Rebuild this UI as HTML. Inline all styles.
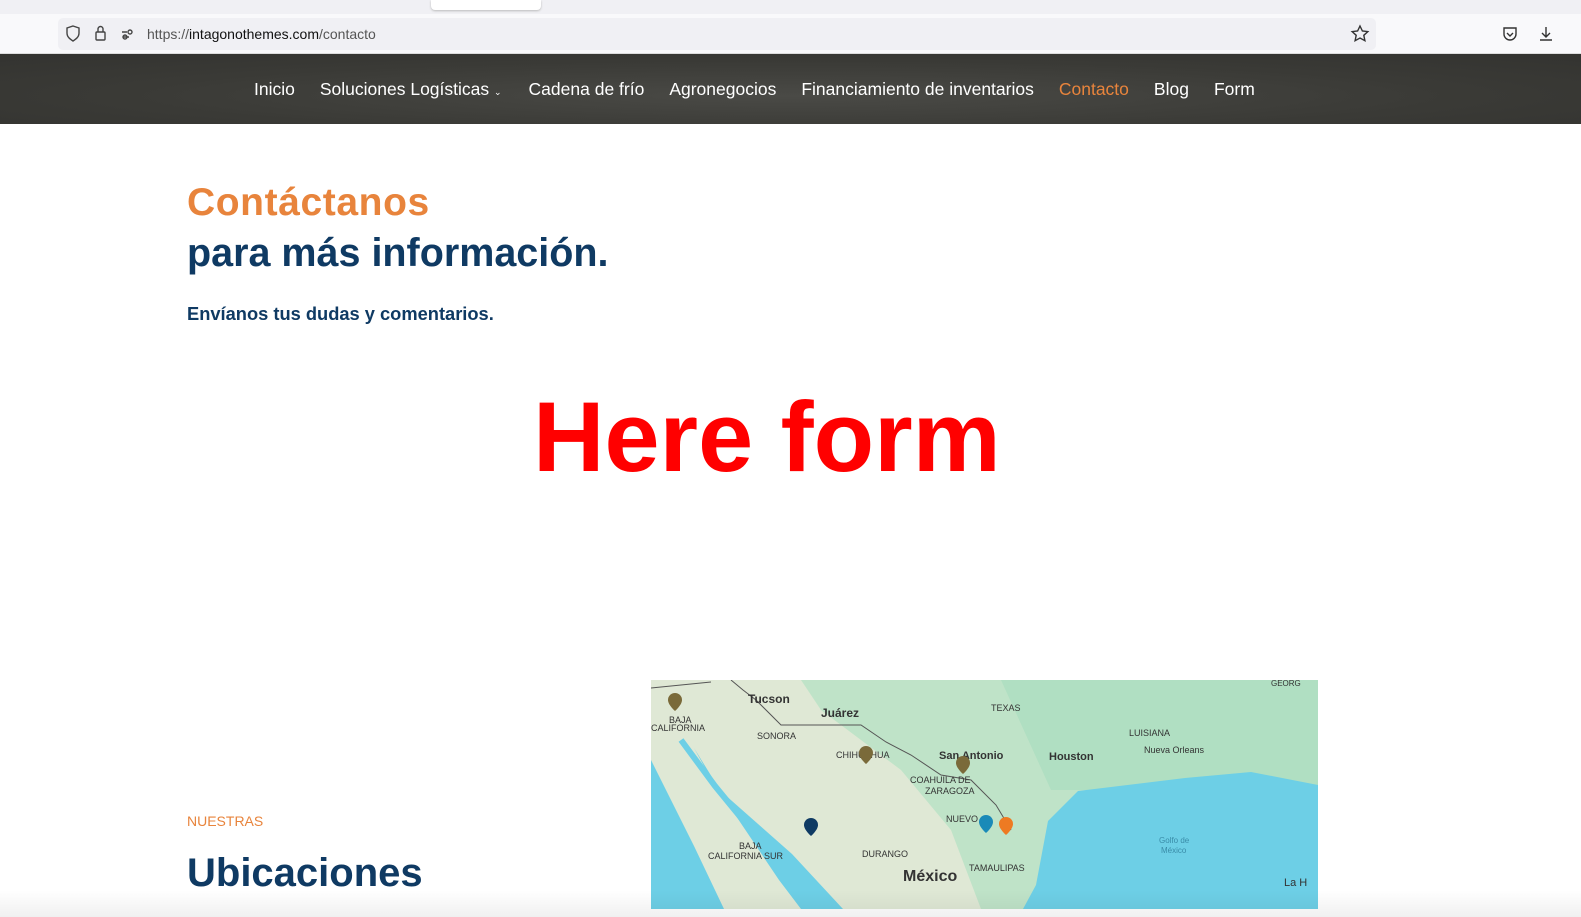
<!DOCTYPE html><html><head><meta charset="utf-8"><style>
*{margin:0;padding:0;box-sizing:border-box}
body{width:1581px;height:917px;overflow:hidden;background:#fff;font-family:"Liberation Sans",sans-serif;position:relative}
.a{position:absolute;white-space:nowrap}
</style></head><body>
<div class="a" style="left:0;top:0;width:1581px;height:14px;background:#f0f0f4"></div>
<div class="a" style="left:431px;top:0;width:110px;height:10px;background:#fff;border-radius:0 0 4px 4px;box-shadow:0 1px 2px #bbb"></div>
<div class="a" style="left:0;top:14px;width:1581px;height:40px;background:#f9f9fb;border-bottom:1px solid #ddd"></div>
<div class="a" style="left:58px;top:18px;width:1318px;height:32px;background:#f0f0f4;border-radius:5px"></div>
<svg class="a" style="left:64px;top:24px" width="80" height="20" fill="none" stroke="#444" stroke-width="1.4"><path d="M9 2l6 2v5c0 4-3 6-6 8-3-2-6-4-6-8V4z"/><rect x="32" y="8" width="9" height="8" rx="1"/><path d="M34 8V5a2.5 2.5 0 015 0v3"/><path d="M58 8h5M59 13h6"/><circle cx="66" cy="8" r="2"/><circle cx="61" cy="13" r="2"/></svg>
<div class="a" style="left:147px;top:26px;font-size:14px;color:#555">https://<span style="color:#111">intagonothemes.com</span>/contacto</div>
<svg class="a" style="left:1350px;top:24px" width="20" height="20" fill="none" stroke="#333" stroke-width="1.4"><path d="M10 2l2.4 5 5.4.6-4 3.7 1.1 5.4L10 14l-4.9 2.7 1.1-5.4-4-3.7 5.4-.6z"/></svg>
<svg class="a" style="left:1500px;top:24px" width="60" height="20" fill="none" stroke="#333" stroke-width="1.4"><path d="M4 4h12v6a6 6 0 01-12 0z"/><path d="M7 9l3 3 3-3"/><path d="M46 3v10M42 9l4 4 4-4M40 16h12"/></svg>
<div class="a" style="left:0;top:54px;width:1581px;height:70px;background:radial-gradient(ellipse at 50% 60%,#4a4a46 0%,#3a3a36 60%,#333330 100%)"></div>
<div class="a" style="top:79px;left:254px;font-size:17.5px;color:#fff">
<span>Inicio</span><span style="margin-left:25px">Soluciones Logísticas <span style="font-size:9px">⌄</span></span><span style="margin-left:27px">Cadena de frío</span><span style="margin-left:25px">Agronegocios</span><span style="margin-left:25px">Financiamiento de inventarios</span><span style="margin-left:25px;color:#e8843c">Contacto</span><span style="margin-left:25px">Blog</span><span style="margin-left:25px">Form</span></div>
<div class="a" style="left:187px;top:181px;font-size:39px;font-weight:bold;color:#e8843c;letter-spacing:.6px">Contáctanos</div>
<div class="a" style="left:187px;top:231px;font-size:39.5px;font-weight:bold;color:#0f3a63">para más información.</div>
<div class="a" style="left:187px;top:303px;font-size:18.3px;font-weight:bold;color:#0f3a63">Envíanos tus dudas y comentarios.</div>
<div class="a" style="left:533px;top:380px;font-size:99px;font-weight:bold;color:#ff0000">Here form</div>
<div class="a" style="left:187px;top:813px;font-size:14px;color:#e8843c">NUESTRAS</div>
<div class="a" style="left:187px;top:851px;font-size:40px;font-weight:bold;color:#0f3a63">Ubicaciones</div>
<svg class="a" style="left:651px;top:680px" width="667" height="229" font-family="Liberation Sans" font-size="10" fill="#333">
<rect width="667" height="229" fill="#dfe8d5"/>
<path d="M150 0H667V229H330L300 150 250 90 170 30Z" fill="#bfe3c8"/>
<path d="M350 0H667V110H400Z" fill="#b0dfc2"/>
<path d="M667 105L600 92 534 98 427 111 397 141 385 205 372 229H667Z" fill="#6dcfe6"/>
<path d="M0 80L43 166 73 229H0Z" fill="#6dcfe6"/>
<path d="M43 68L64 106 141 174 192 229H150L128 200 85 136Z" fill="#6dcfe6"/>
<path d="M30 60L64 106 100 150" fill="none" stroke="#6dcfe6" stroke-width="6"/>
<path d="M0 8L60 2M80 0L92 10 105 20 130 45H210L235 62 260 75 290 95 320 100 345 125 360 150" fill="none" stroke="#555" stroke-width="1"/>
<text x="97" y="23" font-weight="bold" font-size="12">Tucson</text><text x="170" y="37" font-weight="bold" font-size="12">Juárez</text>
<text x="18" y="43" font-size="9">BAJA</text><text x="0" y="51" font-size="9">CALIFORNIA</text>
<text x="106" y="59" font-size="9">SONORA</text><text x="340" y="31" font-size="9">TEXAS</text>
<text x="185" y="78" font-size="9">CHIHUAHUA</text><text x="288" y="79" font-weight="bold" font-size="11">San Antonio</text>
<text x="398" y="80" font-weight="bold" font-size="11">Houston</text><text x="478" y="56" font-size="9">LUISIANA</text><text x="493" y="73" font-size="9">Nueva Orleans</text>
<text x="259" y="103" font-size="9">COAHUILA DE</text><text x="274" y="114" font-size="9">ZARAGOZA</text>
<text x="295" y="142" font-size="9">NUEVO</text>
<text x="88" y="169" font-size="9">BAJA</text><text x="57" y="179" font-size="9">CALIFORNIA SUR</text>
<text x="211" y="177" font-size="9">DURANGO</text><text x="318" y="191" font-size="9">TAMAULIPAS</text>
<text x="252" y="201" font-weight="bold" font-size="16">México</text><text x="508" y="163" font-size="8" fill="#3a8ca8">Golfo de</text><text x="510" y="173" font-size="8" fill="#3a8ca8">México</text>
<text x="633" y="206" font-size="11">La H</text><text x="620" y="6" font-size="8">GEORG</text>
<g><path d="M17 20a7 7 0 0114 0c0 5-7 11-7 11s-7-6-7-11z" fill="#7a6a3a"/><path d="M208 73a7 7 0 0114 0c0 5-7 11-7 11s-7-6-7-11z" fill="#7a6a3a"/><path d="M305 83a7 7 0 0114 0c0 5-7 11-7 11s-7-6-7-11z" fill="#7a6a3a"/><path d="M153 145a7 7 0 0114 0c0 5-7 11-7 11s-7-6-7-11z" fill="#0f3a63"/><path d="M328 142a7 7 0 0114 0c0 5-7 11-7 11s-7-6-7-11z" fill="#1a8ab8"/><path d="M348 144a7 7 0 0114 0c0 5-7 11-7 11s-7-6-7-11z" fill="#ee7a22"/></g>
</svg>
<div class="a" style="left:0;top:890px;width:1581px;height:27px;background:linear-gradient(rgba(0,0,0,0),rgba(0,0,0,.06))"></div>
</body></html>
